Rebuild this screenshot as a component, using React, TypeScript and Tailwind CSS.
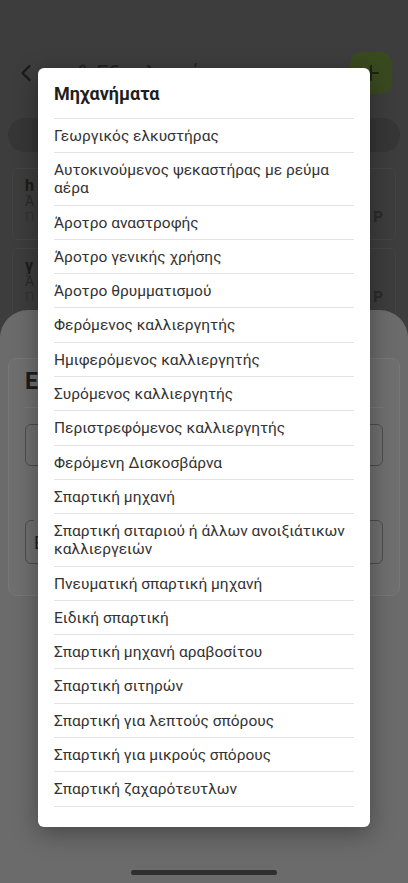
import { ChevronLeft, Plus, Sprout } from 'lucide-react';

const machines = [
  'Γεωργικός ελκυστήρας',
  'Αυτοκινούμενος ψεκαστήρας με ρεύμα αέρα',
  'Άροτρο αναστροφής',
  'Άροτρο γενικής χρήσης',
  'Άροτρο θρυμματισμού',
  'Φερόμενος καλλιεργητής',
  'Ημιφερόμενος καλλιεργητής',
  'Συρόμενος καλλιεργητής',
  'Περιστρεφόμενος καλλιεργητής',
  'Φερόμενη Δισκοσβάρνα',
  'Σπαρτική μηχανή',
  'Σπαρτική σιταριού ή άλλων ανοιξιάτικων καλλιεργειών',
  'Πνευματική σπαρτική μηχανή',
  'Ειδική σπαρτική',
  'Σπαρτική μηχανή αραβοσίτου',
  'Σπαρτική σιτηρών',
  'Σπαρτική για λεπτούς σπόρους',
  'Σπαρτική για μικρούς σπόρους',
  'Σπαρτική ζαχαρότευτλων',
];

function BackgroundCard({ first }: { first: string }) {
  return (
    <div className="mx-3 h-[72px] rounded-md border border-[#444] bg-[#3d3d3d] px-3 pt-[9px] flex justify-between">
      <div className="flex flex-col">
        <span className="text-[16px] leading-[16px] font-bold text-[#1c1c1c]">{first}</span>
        <span className="text-[14px] leading-[15px] text-[#2a2a2a]">Ά</span>
        <span className="text-[13px] leading-[15px] text-[#333]">Π</span>
      </div>
      <span className="self-end text-[15px] leading-[16px] font-bold text-[#2a2a2a] mb-[14px]">P</span>
    </div>
  );
}

export default function App() {
  return (
    <div
      className="relative w-[408px] h-[883px] overflow-hidden bg-[#3d3d3d]"
      style={{ fontFamily: 'Roboto, "Noto Sans", sans-serif' }}
    >
      {/* page behind the overlays */}
      <div className="flex flex-col">
        <div className="h-[52px]" />
        <div className="h-[42px] flex items-center pl-3 pr-4">
          <ChevronLeft className="w-7 h-7 text-[#1a1a1a]" strokeWidth={2} />
          <div className="ml-7 flex items-center gap-2">
            <Sprout className="w-5 h-5 text-[#222]" />
            <span className="text-[22px] text-[#222]">Εξοπλισμός</span>
          </div>
          <div className="ml-auto w-[42px] h-[42px] rounded-xl bg-[#3a4a1f] flex items-center justify-center">
            <Plus className="w-6 h-6 text-[#1c2410]" strokeWidth={2} />
          </div>
        </div>
        <div className="mt-6 mx-2 h-[34px] rounded-full bg-[#363636]" />
        <div className="mt-4 flex flex-col gap-2">
          <BackgroundCard first="h" />
          <BackgroundCard first="γ" />
        </div>
      </div>

      {/* bottom sheet */}
      <div className="absolute left-0 right-0 top-[310px] bottom-0 rounded-t-[28px] bg-[#6b6b6b] pt-[48px] px-2">
        <div className="h-[238px] rounded-lg border border-[#777] bg-[#6f6f6f] px-4 pt-[10px]">
          <div className="text-[23px] leading-[26px] font-bold text-[#1c1c1c] pb-[12px] border-b border-[#787878]">Επεξεργασία</div>
          <div className="mt-4 h-[42px] rounded-md border border-[#4c4c4c] px-3 flex items-center text-[#333]">·</div>
          <div className="relative mt-[54px] h-[44px] rounded-md border border-[#4c4c4c] px-2 flex items-center">
            <span className="absolute -top-[8px] left-2 px-1 bg-[#6f6f6f] text-[11px] leading-[14px] text-[#3a3a3a]">Ε</span>
            <span className="text-[18px] text-[#222]">Ε</span>
          </div>
        </div>
      </div>

      {/* home indicator */}
      <div className="absolute bottom-[8px] left-[131px] w-[146px] h-[5px] rounded-full bg-[#2f2f2f]" />

      {/* dialog */}
      <div className="absolute left-[38px] top-[68px] w-[332px] rounded-md bg-white px-4 pt-[12px] pb-5 shadow-[0_6px_24px_rgba(0,0,0,0.35)]">
        <div className="text-[18px] leading-[27px] font-bold text-[#1f1f1f] pb-[11px] border-b border-[#e3e3e3]">Μηχανήματα</div>
        <ul>
          {machines.map((m) => (
            <li
              key={m}
              className="border-b border-[#e3e3e3] pt-[8px] pb-[7.3px] text-[15.5px] leading-[18px] text-[#333]"
            >
              {m}
            </li>
          ))}
        </ul>
      </div>
    </div>
  );
}
